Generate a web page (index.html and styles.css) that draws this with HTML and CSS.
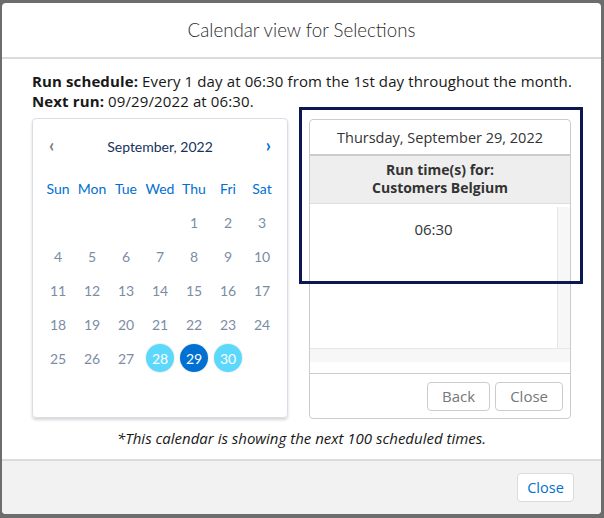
FILE: index.html
```html
<!DOCTYPE html>
<html>
<head>
<meta charset="utf-8">
<link rel="stylesheet" href="styles.css">
</head>
<body>
<div class="backdrop">
  <div class="modal">
    <div class="modal-header"><h2 class="title">Calendar view for Selections</h2></div>
    <div class="modal-body">
      <p class="line"><b>Run schedule:</b> Every 1 day at 06:30 from the 1st day throughout the month.</p>
      <p class="line"><b>Next run:</b> 09/29/2022 at 06:30.</p>
      <div class="content">
        <div class="cal">
          <div class="cal-head">
            <span class="arrow prev">&#8249;</span>
            <span class="month">September, 2022</span>
            <span class="arrow next">&#8250;</span>
          </div>
          <div class="grid">
            <span class="dn">Sun</span><span class="dn">Mon</span><span class="dn">Tue</span><span class="dn">Wed</span><span class="dn">Thu</span><span class="dn">Fri</span><span class="dn">Sat</span>
            <span></span><span></span><span></span><span></span><span class="d">1</span><span class="d">2</span><span class="d">3</span>
            <span class="d">4</span><span class="d">5</span><span class="d">6</span><span class="d">7</span><span class="d">8</span><span class="d">9</span><span class="d">10</span>
            <span class="d">11</span><span class="d">12</span><span class="d">13</span><span class="d">14</span><span class="d">15</span><span class="d">16</span><span class="d">17</span>
            <span class="d">18</span><span class="d">19</span><span class="d">20</span><span class="d">21</span><span class="d">22</span><span class="d">23</span><span class="d">24</span>
            <span class="d">25</span><span class="d">26</span><span class="d">27</span><span class="d"><i class="dot light">28</i></span><span class="d"><i class="dot dark">29</i></span><span class="d"><i class="dot light">30</i></span><span></span>
          </div>
        </div>
        <div class="panel">
          <div class="panel-date">Thursday, September 29, 2022</div>
          <div class="panel-sub"><div>Run time(s) for:</div><div>Customers Belgium</div></div>
          <div class="panel-body">
            <div class="scroll">
              <div class="scroll-content">06:30</div>
              <div class="vtrack"></div>
            </div>
            <div class="htrack"></div>
          </div>
          <div class="panel-foot">
            <button class="pbtn">Back</button>
            <button class="pbtn">Close</button>
          </div>
        </div>
      </div>
      <p class="note">*This calendar is showing the next 100 scheduled times.</p>
    </div>
    <div class="modal-footer"><button class="close-btn">Close</button></div>
    <div class="highlight"></div>
  </div>
</div>
</body>
</html>
```
FILE: styles.css
```css
* { box-sizing: border-box; }
html, body { margin: 0; padding: 0; }
body {
  width: 604px;
  height: 518px;
  overflow: hidden;
  background: #6d6d6d;
  font-family: Lato, "Open Sans", Arial, sans-serif;
  color: #181818;
}
.backdrop {
  padding: 3px 3px 4px 2px;
  height: 518px;
}
.modal {
  position: relative;
  width: 599px;
  height: 511px;
  background: #fff;
  border-radius: 4px;
  display: flex;
  flex-direction: column;
  overflow: hidden;
}
.modal-header {
  height: 56px;
  border-bottom: 2px solid #dddbda;
  display: flex;
  align-items: center;
  justify-content: center;
}
.title {
  margin: 0;
  font-size: 18.7px;
  font-weight: 300;
  color: #2b2b2b;
}
.modal-body {
  flex: 1;
  padding: 12px 30px 0 30px;
}
.line {
  margin: 0;
  font-family: "Open Sans", Lato, sans-serif;
  font-size: 15px;
  letter-spacing: 0.12px;
  line-height: 20px;
  color: #181818;
  white-space: nowrap;
}
.line b { font-weight: 700; }
.content {
  display: flex;
  gap: 21px;
  margin-top: 7px;
  align-items: flex-start;
}
.cal {
  width: 256px;
  height: 300px;
  border: 1px solid #d8dde6;
  border-radius: 4px;
  box-shadow: 0 2px 3px rgba(0,0,0,0.16);
  padding: 15px 8px 0 8px;
}
.cal-head {
  height: 24px;
  display: flex;
  align-items: center;
  justify-content: space-between;
  padding: 0 8px 0 8px;
}
.month {
  font-size: 14px;
  color: #16325c;
}
.arrow {
  font-size: 18px;
  font-weight: 700;
  line-height: 20px;
  margin-top: -3px;
}
.prev { color: #7a7a7a; }
.next { color: #0070d2; }
.grid {
  margin-top: 13px;
  display: grid;
  grid-template-columns: repeat(7, 34px);
  grid-auto-rows: 34px;
}
.grid span {
  display: flex;
  align-items: center;
  justify-content: center;
  font-size: 14px;
}
.dn { color: #0070d2; font-size: 14px; }
.d { color: #7d8ca5; }
.dot {
  font-style: normal;
  width: 28px;
  height: 28px;
  border-radius: 50%;
  display: flex;
  align-items: center;
  justify-content: center;
  color: #fff;
  box-shadow: 0 0 0 1px rgba(0,0,0,0.06);
}
.light { background: #5bd8fc; }
.dark { background: #0070d2; }
.panel {
  margin-top: 1px;
  width: 262px;
  height: 300px;
  border: 1px solid #cccccc;
  border-radius: 4px;
  display: flex;
  flex-direction: column;
  font-family: "Open Sans", Lato, sans-serif;
  color: #333;
}
.panel-date {
  height: 36px;
  border-bottom: 2px solid #cccccc;
  display: flex;
  align-items: center;
  justify-content: center;
  font-size: 14.5px;
}
.panel-sub {
  height: 48px;
  background: #eeeeee;
  border-bottom: 1px solid #dddddd;
  text-align: center;
  font-weight: 700;
  font-size: 14px;
  line-height: 18px;
  padding-top: 5px;
}
.panel-body {
  height: 170px;
  border-bottom: 1px solid #cccccc;
  display: flex;
  flex-direction: column;
}
.scroll {
  display: flex;
  height: 144px;
}
.scroll-content {
  flex: 1;
  text-align: center;
  font-size: 15px;
  padding-top: 15px;
}
.vtrack {
  width: 13px;
  margin-top: 3px;
  background: #f7f7f7;
  border-left: 1px solid #e6e6e6;
}
.htrack {
  height: 14px;
  background: #f7f7f7;
  border-top: 1px solid #e6e6e6;
}
.panel-foot {
  flex: 1;
  display: flex;
  justify-content: flex-end;
  align-items: center;
  gap: 5px;
  padding-right: 7px;
}
.pbtn {
  height: 29px;
  padding: 0 14px;
  background: #fff;
  border: 1px solid #cccccc;
  border-radius: 4px;
  font-family: "Open Sans", Lato, sans-serif;
  font-size: 15px;
  color: #777;
}
.note {
  margin: 9px 0 0 0;
  text-align: center;
  font-family: "Open Sans", Lato, sans-serif;
  font-style: italic;
  font-size: 15px;
  line-height: 20px;
  color: #181818;
  white-space: nowrap;
}
.modal-footer {
  height: 55px;
  border-top: 2px solid #dddbda;
  background: #f3f2f2;
  display: flex;
  justify-content: flex-end;
  align-items: center;
  padding-right: 27px;
}
.close-btn {
  height: 29px;
  width: 57px;
  background: #fff;
  border: 1px solid #dddbda;
  border-radius: 4px;
  font-family: "Open Sans", Lato, sans-serif;
  font-size: 14.5px;
  color: #0070d2;
}
.highlight {
  position: absolute;
  left: 297px;
  top: 104px;
  width: 284px;
  height: 177px;
  border: 3px solid #0c1850;
}
```
